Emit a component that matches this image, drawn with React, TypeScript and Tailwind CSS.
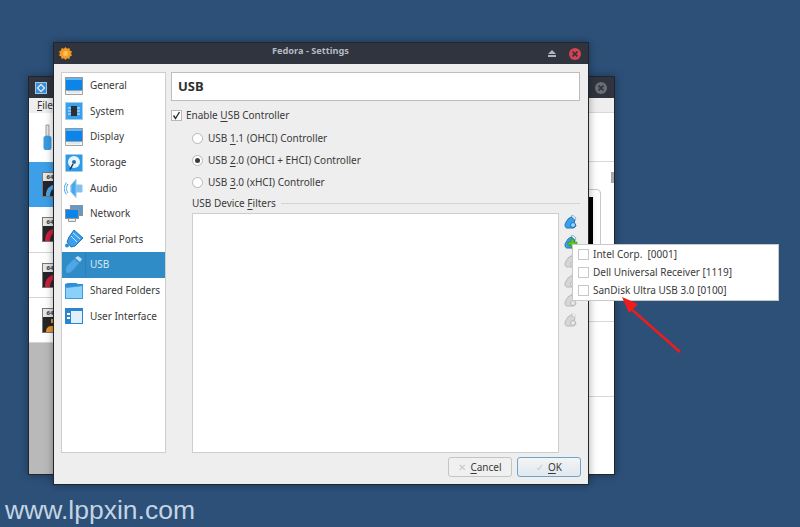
import React from 'react';

const FONT = { fontFamily: '"Noto Sans", sans-serif' };

type NavItem = { label: string; kind: string };

const NAV: NavItem[] = [
  { label: 'General', kind: 'monitor' },
  { label: 'System', kind: 'system' },
  { label: 'Display', kind: 'monitor' },
  { label: 'Storage', kind: 'storage' },
  { label: 'Audio', kind: 'audio' },
  { label: 'Network', kind: 'network' },
  { label: 'Serial Ports', kind: 'serial' },
  { label: 'USB', kind: 'usb' },
  { label: 'Shared Folders', kind: 'folder' },
  { label: 'User Interface', kind: 'ui' },
];

function NavIcon({ kind }: { kind: string }) {
  switch (kind) {
    case 'monitor':
      return (
        <svg width="20" height="20" viewBox="0 0 20 20">
          <path d="M1.5 1.5h17v13h-17z" fill="#0c84e8" stroke="#8f959a" />
          <rect x="2" y="2" width="16" height="2" fill="#5fb6f4" />
          <path d="M1.5 14.5h17v4h-17z" fill="#f4f4f4" stroke="#a2a2a2" />
          <rect x="4" y="15" width="12" height="2" fill="#d9e8f2" />
        </svg>
      );
    case 'system':
      return (
        <svg width="20" height="20" viewBox="0 0 20 20">
          <rect x="1.5" y="1.5" width="17" height="17" fill="#38a0ee" stroke="#a4cdec" />
          <rect x="7" y="5" width="6" height="10" fill="#2c3036" />
          <path d="M4 7h3M4 10h3M4 13h3M13 7h3M13 10h3M13 13h3" stroke="#d9eefc" />
        </svg>
      );
    case 'storage':
      return (
        <svg width="20" height="20" viewBox="0 0 20 20">
          <rect x="1.5" y="1.5" width="17" height="17" rx="1" fill="#2d9be8" stroke="#9cc8ea" />
          <circle cx="10" cy="9" r="6" fill="#e8f4fc" />
          <circle cx="10" cy="9" r="2" fill="#2d6ea8" />
          <path d="M9 11l-3 5.5" stroke="#20344a" strokeWidth="1.5" />
        </svg>
      );
    case 'audio':
      return (
        <svg width="20" height="20" viewBox="0 0 20 20">
          <path d="M7 7h11v7H7z" fill="#7cc2f2" stroke="#8cc4ec" />
          <path d="M7 7l5-5.500v18L7 14z" fill="#4aa8ec" stroke="#8cc4ec" />
          <path d="M4 6c-2 3-2 6 0 9M2.500 4.500c-3 4-3 8 0 12" fill="none" stroke="#4aa4e6" />
        </svg>
      );
    case 'network':
      return (
        <svg width="20" height="20" viewBox="0 0 20 20">
          <rect x="6.500" y="1.500" width="12" height="10" fill="#5f9ad0" stroke="#8d9296" />
          <rect x="1.500" y="5.500" width="13" height="9" fill="#0c84e8" stroke="#8d9296" />
          <path d="M4.500 14.500h7v3h-7z" fill="#ececec" stroke="#9a9a9a" />
        </svg>
      );
    case 'serial':
      return (
        <svg width="20" height="20" viewBox="0 0 20 20">
          <path d="M10 1l9 8-8 8-4 1-4-5 2-5z" fill="#3aa0ec" stroke="#1e74b8" />
          <path d="M9 4l7 6M7 7l6 6" stroke="#cfe8fa" />
          <circle cx="3" cy="16.500" r="2" fill="#2d8ed8" />
        </svg>
      );
    case 'usb':
      return (
        <svg width="20" height="20" viewBox="0 0 20 20">
          <path d="M2 14c0-2 1-3 2-4l6-6 5 4-6 7c-2 2-3 3-5 3s-2-2-2-4z" fill="#4fa6e4" />
          <path d="M11 3l3-2 4 3-2 3z" fill="#c4dcf0" />
        </svg>
      );
    case 'folder':
      return (
        <svg width="20" height="20" viewBox="0 0 20 20">
          <path d="M1 3l3-1h8l2 1h5v15H1z" fill="#2d8ed8" />
          <path d="M1.500 6.500l10-1 7-1v13h-17z" fill="#8ad0f8" stroke="#3a9be0" />
        </svg>
      );
    default:
      return (
        <svg width="20" height="20" viewBox="0 0 20 20">
          <rect x="1.500" y="2.500" width="17" height="15" fill="#dff0fb" stroke="#2a85d0" />
          <rect x="1" y="2" width="18" height="3" fill="#2a85d0" />
          <rect x="2" y="5" width="5" height="12" fill="#2a85d0" />
          <rect x="3" y="7" width="3" height="2" fill="#fff" />
          <rect x="3" y="11" width="3" height="2" fill="#fff" />
        </svg>
      );
  }
}

function FilterIcon({ active, add }: { active?: boolean; add?: boolean }) {
  const body = active ? '#3aa0ec' : '#d6d6d6';
  const edge = active ? '#1e74b8' : '#b8b8b8';
  return (
    <svg width="14" height="14" viewBox="0 0 14 14">
      <path d="M1 10c0-2 2-4 3-6l3-2 4 3-1 3 2 2c0 2-2 3-3 3H3c-1 0-2-1-2-3z" fill={body} stroke={edge} />
      <path d="M7 1l2-.5 3 2.500-1 2z" fill={active ? '#f2f6fa' : '#f2f2f2'} stroke={edge} strokeWidth=".5" />
      {add ? <path d="M4 7h3V4h3v3h3v3h-3v3H7v-3H4z" fill="#62c22e" stroke="#2f8a10" strokeWidth=".6" /> : <circle cx="9" cy="10" r="2.500" fill={active ? '#9fd2f6' : '#e8e8e8'} stroke={edge} />}
    </svg>
  );
}

function Underlined({ before, u, after }: { before?: string; u: string; after?: string }) {
  return (
    <span className="whitespace-nowrap">
      {before}
      <span className="underline underline-offset-2">{u}</span>
      {after}
    </span>
  );
}

function Radio({ checked, children }: { checked?: boolean; children: React.ReactNode }) {
  return (
    <div className="flex h-[22px] items-center gap-[5px]">
      <span className="flex h-[11px] w-[11px] items-center justify-center rounded-full border border-[#b8b8b8] bg-white">
        {checked && <span className="h-[5px] w-[5px] rounded-full bg-[#3a3a3a]" />}
      </span>
      {children}
    </div>
  );
}

function VmBadge({ art }: { art: string }) {
  return (
    <div className="h-[25px] w-[16px] border border-[#777] bg-[#26262a]">
      <div className="flex h-[8px] items-center justify-center bg-[#e6e6e6] text-[6px] font-bold leading-none text-[#333]">64</div>
      <svg width="14" height="15" viewBox="0 0 14 15">
        {art === 'blue' && <path d="M3 15c0-7 3-11 11-12v3c-4 1-7 4-7 9z" fill="#4aa8ec" />}
        {art === 'red' && <path d="M2 15c0-7 3-12 12-13v4c-4 0-7 4-7 9z" fill="#d0203a" />}
        {art === 'orange' && <path d="M3 15c0-5 3-6 6-6s4 2 5 6zM8 2h6v4H8z" fill="#e8962c" />}
      </svg>
    </div>
  );
}

function BackWindow() {
  return (
    <div className="absolute left-[28px] top-[76px] flex h-[399px] w-[587px] flex-col border border-[#22262c] bg-white shadow-[0_0_8px_rgba(0,0,0,0.35)]">
      <div className="flex h-[21px] shrink-0 items-center justify-between bg-[#2f343f] pl-[6px] pr-[7px]">
        <span className="flex h-[12px] w-[12px] items-center justify-center border border-[#9cc8ea] bg-[#3a8fd8]">
          <span className="h-[6px] w-[6px] rotate-45 border border-white" />
        </span>
        <span className="flex h-[12px] w-[12px] items-center justify-center rounded-full bg-[#6b6e75]">
          <svg width="6" height="6" viewBox="0 0 6 6">
            <path d="M0.500 0.500l5 5M5.500 0.500l-5 5" stroke="#2f343f" strokeWidth="1.600" />
          </svg>
        </span>
      </div>
      <div className="flex min-h-0 flex-1">
        <div className="flex w-[230px] shrink-0 flex-col">
          <div className="flex h-[15px] items-center bg-[#eeeeee] pl-[8px] text-[10px] text-[#333]">
            <span className="underline">F</span>ile
          </div>
          <div className="flex h-[49px] items-center pl-[14px]">
            <svg width="9" height="27" viewBox="0 0 9 27">
              <path d="M3 1h3v11H3z" fill="#e8e8e8" stroke="#888" strokeWidth=".8" />
              <rect x="0.500" y="12" width="8" height="14" rx="2" fill="#3a9be0" />
            </svg>
          </div>
          <div className="flex h-[45px] items-center bg-[#3d9fe8] pl-[13px]">
            <VmBadge art="blue" />
          </div>
          <div className="flex h-[46px] items-center border-b border-[#d4d4d4] pl-[13px]">
            <VmBadge art="red" />
          </div>
          <div className="flex h-[45px] items-center border-b border-[#d4d4d4] pl-[13px]">
            <VmBadge art="red" />
          </div>
          <div className="flex h-[45px] items-center border-b border-[#d4d4d4] pl-[13px]">
            <VmBadge art="orange" />
          </div>
          <div className="flex-1 bg-[#b9b9b9]" />
        </div>
        <div className="flex min-w-0 flex-1 flex-col">
          <div className="h-[15px] border-b border-[#d8d8d8] bg-[#eeeeee]" />
          <div className="h-[49px] border-b border-[#d8d8d8]" />
          <div className="relative h-[160px] border-b border-[#d8d8d8] pr-[13px] pt-[27px]">
            <span className="absolute right-0 top-[10px] h-[11px] w-[3px] bg-[#a8a8a8]" />
            <div className="ml-auto h-[70px] w-[100px] rounded-tr-[4px] border border-[#c8c8c8] bg-white pr-[7px] pt-[7px]">
              <div className="h-full bg-black" />
            </div>
          </div>
          <div className="h-[75px] border-b border-[#d8d8d8]" />
          <div className="flex-1" />
        </div>
      </div>
    </div>
  );
}

function Dialog() {
  return (
    <div className="absolute left-[53px] top-[42px] flex h-[443px] w-[536px] flex-col border border-[#22262c] bg-[#eeeeee] text-[10px] text-[#3a3a3a] shadow-[0_0_8px_rgba(0,0,0,0.35)]">
      <div className="relative flex h-[21px] shrink-0 items-center justify-between bg-[#2f343f] pl-[5px] pr-[7px]">
        <svg width="13" height="13" viewBox="0 0 13 13">
          <path d="M6.500 0l1.600 1.800 2.300-.7.5 2.400 2.100 1-1 2 1 2-2.100 1-.5 2.400-2.300-.7-1.600 1.800-1.600-1.800-2.300.7-.5-2.400-2.100-1 1-2-1-2 2.100-1 .5-2.400 2.300.7z" fill="#f59a23" />
          <circle cx="6.500" cy="6.500" r="2.500" fill="#f7c25a" />
        </svg>
        <span className="absolute left-[218px] top-[0.500px] text-[9.200px] font-bold text-[#b6bac2]">Fedora - Settings</span>
        <div className="flex items-center gap-[13px]">
          <svg width="8" height="7" viewBox="0 0 8 7">
            <path d="M4 0l4 4H0z" fill="#b0b4bc" />
            <rect y="5" width="8" height="2" fill="#b0b4bc" />
          </svg>
          <span className="flex h-[12px] w-[12px] items-center justify-center rounded-full bg-[#d9434f]">
            <svg width="6" height="6" viewBox="0 0 6 6">
              <path d="M0.500 0.500l5 5M5.500 0.500l-5 5" stroke="#2f343f" strokeWidth="1.600" />
            </svg>
          </span>
        </div>
      </div>
      <div className="flex min-h-0 flex-1 gap-[5px] pl-[7px] pr-[8px] pt-[8px]">
        <div className="mb-[31px] w-[105px] shrink-0 border border-[#cdcdcd] bg-white">
          {NAV.map(item => (
            <div
              key={item.label}
              className={`flex h-[25.600px] items-center whitespace-nowrap ${item.kind === 'usb' ? 'bg-[#308cc6] text-[#dbe9f3]' : ''}`}
            >
              <div className={`flex h-full w-[24px] shrink-0 items-center justify-center ${item.kind === 'usb' ? 'border-r border-[#2b80b6]' : ''}`}>
                <NavIcon kind={item.kind} />
              </div>
              <span className="pl-[4px]">{item.label}</span>
            </div>
          ))}
        </div>
        <div className="flex min-w-0 flex-1 flex-col">
          <div className="flex h-[29px] shrink-0 items-center border border-[#bdbdbd] bg-white pb-[-1px] pl-[6px] text-[13px] font-bold text-[#2f2f2f]">
            USB
          </div>
          <div className="mt-[5px] flex h-[18px] items-center gap-[4px]">
            <span className="flex h-[11px] w-[11px] items-center justify-center border border-[#b8b8b8] bg-white">
              <svg width="9" height="9" viewBox="0 0 9 9">
                <path d="M1.500 4.500l2 3 4-6.500" fill="none" stroke="#2f2f2f" strokeWidth="1.400" />
              </svg>
            </span>
            <Underlined before="Enable " u="U" after="SB Controller" />
          </div>
          <div className="ml-[21px] mt-[3px] flex flex-col">
            <Radio><Underlined before="USB " u="1" after=".1 (OHCI) Controller" /></Radio>
            <Radio checked><Underlined before="USB " u="2" after=".0 (OHCI + EHCI) Controller" /></Radio>
            <Radio><Underlined before="USB " u="3" after=".0 (xHCI) Controller" /></Radio>
            <div className="mt-[2.500px] flex items-center gap-[5px]">
              <Underlined before="USB Device " u="F" after="ilters" />
              <span className="h-px flex-1 bg-[#d4d4d4]" />
            </div>
            <div className="mt-[2.750px] flex gap-[2px]">
              <div className="h-[240px] w-[367px] border border-[#cdcdcd] bg-white" />
              <div className="flex flex-col gap-[5.500px] pl-[3px] pt-[2px]">
                <FilterIcon active />
                <FilterIcon active add />
                <FilterIcon />
                <FilterIcon />
                <FilterIcon />
                <FilterIcon />
              </div>
            </div>
          </div>
        </div>
      </div>
      <div className="absolute bottom-[7px] right-[7px] flex gap-[5px]">
        <div className="flex h-[20px] w-[64px] items-center justify-center gap-[4px] rounded-[3px] border border-[#c4c4c4] bg-[#f0f0f0]">
          <span className="text-[#c8c8c8]">✕</span>
          <Underlined u="C" after="ancel" />
        </div>
        <div className="flex h-[20px] w-[64px] items-center justify-center gap-[4px] rounded-[3px] border border-[#6ea4cc] bg-gradient-to-b from-[#f4f4f4] to-[#dfe8f0]">
          <span className="text-[#c8c8c8]">✓</span>
          <Underlined u="O" after="K" />
        </div>
      </div>
    </div>
  );
}

function PopupMenu() {
  const items = ['Intel Corp.  [0001]', 'Dell Universal Receiver [1119]', 'SanDisk Ultra USB 3.0 [0100]'];
  return (
    <div className="absolute left-[572px] top-[244px] flex h-[57px] w-[207px] flex-col justify-center border border-[#c8c8c8] bg-white text-[10px] text-[#3a3a3a]">
      {items.map(t => (
        <div key={t} className="flex h-[18.500px] items-center gap-[4px] pl-[5px]">
          <span className="h-[11px] w-[11px] border border-[#c8c8c8] bg-white" />
          <span className="whitespace-pre">{t}</span>
        </div>
      ))}
    </div>
  );
}

export default function App() {
  return (
    <div className="relative h-[527px] w-[800px] overflow-hidden bg-[#2c5078]" style={FONT}>
      <BackWindow />
      <Dialog />
      <PopupMenu />
      <svg className="absolute left-[615px] top-[295px]" width="70" height="62" viewBox="0 0 70 62">
        <path d="M65 57L14 12" stroke="#ee1c1c" strokeWidth="2.500" fill="none" />
        <path d="M7 2l7 16 9-9z" fill="#ee1c1c" />
      </svg>
      <div className="absolute left-[5px] top-[495px] text-[26.500px] leading-[30px] text-[#c4d4e2]" style={{ fontFamily: '"Liberation Sans", sans-serif' }}>
        www.lppxin.com
      </div>
    </div>
  );
}
